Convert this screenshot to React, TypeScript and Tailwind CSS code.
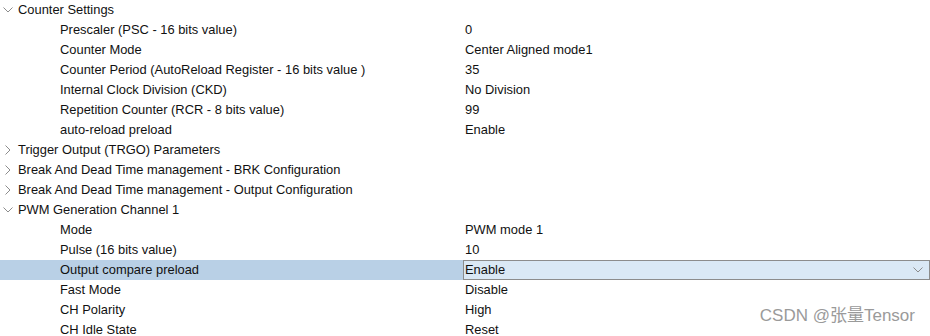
type Row =
  | { kind: 'group'; label: string; open: boolean }
  | { kind: 'item'; label: string; value: string; selected?: boolean };

const ROWS: Row[] = [
  { kind: 'group', label: 'Counter Settings', open: true },
  { kind: 'item', label: 'Prescaler (PSC - 16 bits value)', value: '0' },
  { kind: 'item', label: 'Counter Mode', value: 'Center Aligned mode1' },
  { kind: 'item', label: 'Counter Period (AutoReload Register - 16 bits value )', value: '35' },
  { kind: 'item', label: 'Internal Clock Division (CKD)', value: 'No Division' },
  { kind: 'item', label: 'Repetition Counter (RCR - 8 bits value)', value: '99' },
  { kind: 'item', label: 'auto-reload preload', value: 'Enable' },
  { kind: 'group', label: 'Trigger Output (TRGO) Parameters', open: false },
  { kind: 'group', label: 'Break And Dead Time management - BRK Configuration', open: false },
  { kind: 'group', label: 'Break And Dead Time management - Output Configuration', open: false },
  { kind: 'group', label: 'PWM Generation Channel 1', open: true },
  { kind: 'item', label: 'Mode', value: 'PWM mode 1' },
  { kind: 'item', label: 'Pulse (16 bits value)', value: '10' },
  { kind: 'item', label: 'Output compare preload', value: 'Enable', selected: true },
  { kind: 'item', label: 'Fast Mode', value: 'Disable' },
  { kind: 'item', label: 'CH Polarity', value: 'High' },
  { kind: 'item', label: 'CH Idle State', value: 'Reset' },
];

// thin tree chevrons, like the Windows tree view
function Caret({ open }: { open: boolean }) {
  return (
    <svg width="18" height="20" viewBox="0 0 18 20" className="shrink-0">
      {open ? (
        <path d="M3.5 7.5 L8 12 L12.5 7.5" fill="none" stroke="#8c8c8c" strokeWidth="1" />
      ) : (
        <path d="M5.5 5.5 L10 10 L5.5 14.5" fill="none" stroke="#8c8c8c" strokeWidth="1" />
      )}
    </svg>
  );
}

export default function App() {
  return (
    <div className="relative w-[930px] h-[336px] overflow-hidden bg-white text-[12.9px] text-[#111] font-['Liberation_Sans',Arial,sans-serif]">
      {ROWS.map((row, i) =>
        row.kind === 'group' ? (
          <div key={i} className="flex items-center h-5">
            <Caret open={row.open} />
            <span>{row.label}</span>
          </div>
        ) : row.selected ? (
          <div key={i} className="flex items-center h-5">
            <div className="w-[463px] h-full flex items-center pl-[60px] bg-[#b9d0e6]">{row.label}</div>
            <div className="flex-1 h-full flex items-center justify-between border border-[#8c8c8c] bg-[#dae8f5] pl-[1px] pr-[6px]">
              <span>{row.value}</span>
              <svg width="10" height="6" viewBox="0 0 10 6">
                <path d="M0.5 0.5 L5 5 L9.5 0.5" fill="none" stroke="#8c8c8c" strokeWidth="1" />
              </svg>
            </div>
          </div>
        ) : (
          <div key={i} className="flex items-center h-5">
            <div className="w-[465px] pl-[60px]">{row.label}</div>
            <div>{row.value}</div>
          </div>
        )
      )}
      {/* watermark */}
      <div className="absolute right-[15px] bottom-[8px] text-[17px] text-[#9a9a9a] font-['Liberation_Sans','Noto_Sans_CJK_SC',sans-serif]">
        CSDN @张量Tensor
      </div>
    </div>
  );
}
